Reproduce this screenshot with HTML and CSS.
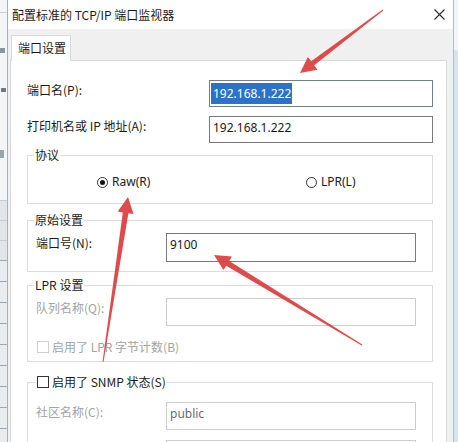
FILE: index.html
```html
<!DOCTYPE html>
<html lang="zh-CN">
<head>
<meta charset="utf-8">
<title>配置标准的 TCP/IP 端口监视器</title>
<link rel="stylesheet" href="styles.css">
</head>
<body>
<div class="screen">
  <div class="edge-left">
    <div class="el-top"></div>
    <div class="el-mid"></div>
    <div class="el-list"></div>
  </div>
  <div class="dialog">
    <div class="titlebar">
      <span class="title">配置标准的 TCP/IP 端口监视器</span>
      <svg class="close" width="11" height="11" viewBox="0 0 11 11"><path d="M0.5 0.5 L10.5 10.5 M10.5 0.5 L0.5 10.5" stroke="#2a2a2a" stroke-width="1.1" fill="none"/></svg>
    </div>
    <div class="tabarea">
      <div class="tabs"><div class="tab">端口设置</div></div>
      <div class="panel">
        <div class="row">
          <span class="lbl">端口名(P):</span>
          <div class="field focus"><span class="sel">192.168.1.222</span></div>
        </div>
        <div class="row row2">
          <span class="lbl">打印机名或 IP 地址(A):</span>
          <div class="field"><span class="val">192.168.1.222</span></div>
        </div>

        <fieldset class="group g-proto">
          <legend>协议</legend>
          <div class="radios">
            <div class="opt"><span class="radio on"></span><span>Raw(R)</span></div>
            <div class="opt"><span class="radio"></span><span>LPR(L)</span></div>
          </div>
        </fieldset>

        <fieldset class="group g-raw">
          <legend>原始设置</legend>
          <div class="grow">
            <span class="lbl">端口号(N):</span>
            <div class="field tall"><span class="val">9100</span></div>
          </div>
        </fieldset>

        <fieldset class="group g-lpr">
          <legend>LPR 设置</legend>
          <div class="grow">
            <span class="lbl dis">队列名称(Q):</span>
            <div class="field off"></div>
          </div>
          <div class="chk-row dis"><span class="box off"></span><span>启用了 LPR 字节计数(B)</span></div>
        </fieldset>

        <fieldset class="group g-snmp">
          <legend><span class="box"></span><span>启用了 SNMP 状态(S)</span></legend>
          <div class="grow">
            <span class="lbl dis">社区名称(C):</span>
            <div class="field off"><span class="val grey">public</span></div>
          </div>
          <div class="grow next">
            <span class="lbl dis"></span>
            <div class="field off"></div>
          </div>
        </fieldset>
      </div>
    </div>
  </div>
  <div class="edge-right"></div>

  <svg class="annot" width="458" height="442" viewBox="0 0 458 442">
    <g fill="#dc3b3b" fill-opacity="0.92">
      <polygon points="300,73 317.5,69.7 314.2,65.3 383.3,10.4 382.7,9.6 311.2,61.3 307.9,56.9"/>
      <polygon points="128,197 133.5,214 128.4,213.2 103.5,362.1 102.5,361.9 122.8,212.4 117.7,211.6"/>
      <polygon points="214,255 223.5,270.1 226.2,265.7 361.7,345.4 362.3,344.6 229.2,260.9 231.9,256.5"/>
    </g>
  </svg>
</div>
</body>
</html>
```

FILE: styles.css
```css
* { box-sizing: border-box; }

html, body {
  margin: 0;
  padding: 0;
  background: #ffffff;
}

body {
  font-family: "Noto Sans CJK SC", "Noto Sans", sans-serif;
  font-size: 12px;
  color: #1a1a1a;
}

.screen {
  position: relative;
  width: 458px;
  height: 442px;
  overflow: hidden;
  display: flex;
}

/* background windows peeking at the edges */
.edge-left {
  width: 7px;
  flex: none;
  display: flex;
  flex-direction: column;
  background: #eef1f3;
}
.el-top {
  height: 200px;
  background:
    linear-gradient(#8b96a0, #8b96a0) 0 48px / 5px 5px no-repeat,
    linear-gradient(#6f7a84, #6f7a84) 1px 88px / 5px 4px no-repeat,
    linear-gradient(#9aa4ad, #9aa4ad) 0 150px / 4px 8px no-repeat,
    linear-gradient(#c7ced4, #c7ced4) 0 12px / 7px 1px no-repeat,
    #f3f5f7;
}
.el-mid {
  height: 60px;
  background:
    repeating-linear-gradient(#c4cad0 0 1px, #e1e5e8 1px 20px);
}
.el-list {
  flex: 1;
  background:
    repeating-linear-gradient(#9ea7af 0 1px, #e9ecef 1px 21px);
}

.edge-right {
  width: 4px;
  flex: none;
  background: linear-gradient(#f1f5f7 0 50px, #d7e6ee 50px);
}

.dialog {
  width: 447px;
  flex: none;
  border-left: 1px solid #9fb3c4;
  border-right: 1px solid #a9bfcb;
  background: #ffffff;
  display: flex;
  flex-direction: column;
}

.titlebar {
  height: 29px;
  flex: none;
  display: flex;
  align-items: center;
  padding-left: 4px;
  padding-right: 8px;
  background: #ffffff;
}
.title {
  font-size: 12px;
  color: #1a1a1a;
  white-space: nowrap;
}
.close {
  margin-left: auto;
  display: block;
}

.tabarea {
  flex: 1;
  background: #f0f0f0;
  padding: 6px 6px 0 2px;
}
.tabs {
  display: flex;
  padding-left: 1px;
}
.tab {
  width: 60px;
  height: 26px;
  margin-bottom: -1px;
  padding: 5px 0 0 6px;
  line-height: 14px;
  background: #ffffff;
  border: 1px solid #d9d9d9;
  border-bottom: none;
  position: relative;
  z-index: 1;
  white-space: nowrap;
}

.panel {
  background: #ffffff;
  border: 1px solid #d9d9d9;
  padding: 19px 13px 0 16px;
  height: 500px;
}

.row {
  display: grid;
  grid-template-columns: 182px 1fr;
  height: 27px;
}
.row2 { margin-top: 9px; }

.lbl {
  line-height: 18px;
  padding-top: 1px;
  white-space: nowrap;
}
.row .lbl { padding-top: 1px; }

.field {
  border: 1px solid #7a7a7a;
  background: #ffffff;
  padding: 2px 0 0 3px;
  line-height: 18px;
  white-space: nowrap;
  font-family: "Noto Sans", "Noto Sans CJK SC", sans-serif;
}
.field.focus {
  border-color: #6f7f8c;
  padding: 2px 0 0 1px;
}
.field.off { border-color: #cccccc; }
.sel {
  display: inline-block;
  background: #2a73c8;
  color: #ffffff;
  line-height: 21px;
  padding: 0 1px 0 2px;
}
.val { color: #1a1a1a; }
.val.grey { color: #6b6b6b; }

.group {
  margin: 0;
  padding: 0 16px 0 8px;
  border: 1px solid #dcdcdc;
  min-inline-size: 0;
}
.group legend {
  padding: 0 1px;
  margin-left: -2px;
  line-height: 14px;
  white-space: nowrap;
}

.g-proto { margin-top: 5px; padding-top: 13px; padding-bottom: 14px; }
.g-raw   { margin-top: 9px; padding-top: 6px; padding-bottom: 9px; }
.g-lpr   { margin-top: 6px; padding-top: 6px; padding-bottom: 7px; }
.g-snmp  { margin-top: 13px; padding-top: 13px; padding-bottom: 20px; }

.g-snmp legend {
  margin-left: 0;
  display: flex;
  align-items: center;
  gap: 3px;
}

.radios {
  display: grid;
  grid-template-columns: 209px auto;
  padding-left: 61px;
  height: 14px;
}
.opt {
  display: flex;
  align-items: center;
  gap: 4px;
  line-height: 14px;
  font-family: "Noto Sans", "Noto Sans CJK SC", sans-serif;
}
.radio {
  width: 11px;
  height: 11px;
  border: 1px solid #333333;
  border-radius: 50%;
  display: grid;
  place-items: center;
  flex: none;
}
.radio.on::after {
  content: "";
  width: 5px;
  height: 5px;
  border-radius: 50%;
  background: #111111;
}

.grow {
  display: grid;
  grid-template-columns: 130px 250px;
  height: 28px;
}
.g-raw .grow { height: 29px; }
.grow.next { margin-top: 10px; }

.dis { color: #a3a3a3; }

.chk-row {
  margin-top: 14px;
  height: 14px;
  display: flex;
  align-items: center;
  gap: 3px;
  padding-left: 1px;
  line-height: 14px;
}
.box {
  width: 12px;
  height: 12px;
  border: 1px solid #333333;
  background: #ffffff;
  flex: none;
}
.box.off { border-color: #cfcfcf; }

.annot {
  position: absolute;
  left: 0;
  top: 0;
  pointer-events: none;
}
```
